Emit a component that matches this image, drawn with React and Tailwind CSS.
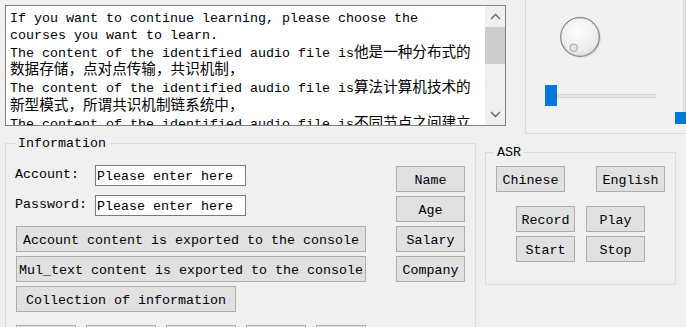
const mono = "font-['Liberation_Mono','Noto_Sans_CJK_SC',monospace]";

const Btn = ({ className = "", children }) => (
  <button
    className={`flex h-[26px] shrink-0 items-center justify-center border border-[#adadad] bg-[#e1e1e1] pt-[3px] text-[13.33px] leading-none text-black ${className}`}
  >
    {children}
  </button>
);

const Cjk = ({ children }) => <span className="text-[14.6px]">{children}</span>;

const Group = ({ title, titleClass, className, children }) => (
  <div className={`relative shrink-0 border border-[#dcdcdc] ${className}`}>
    <span className={`absolute top-[-8px] bg-[#f0f0f0] px-[3px] text-[13.33px] leading-[16px] ${titleClass}`}>
      {title}
    </span>
    {children}
  </div>
);

const Chevron = ({ up }) => (
  <svg width="11" height="7" viewBox="0 0 11 7">
    <path
      d={up ? "M1 6 L5.5 1.5 L10 6" : "M1 1 L5.5 5.5 L10 1"}
      fill="none"
      stroke="#606060"
      strokeWidth="1.3"
    />
  </svg>
);

const Dial = () => (
  <svg width="46" height="46" viewBox="0 0 46 46">
    <defs>
      <radialGradient id="knob" cx="0.45" cy="0.35" r="0.7">
        <stop offset="0" stopColor="#ffffff" />
        <stop offset="0.7" stopColor="#ececec" />
        <stop offset="1" stopColor="#dadada" />
      </radialGradient>
    </defs>
    <circle cx="23.5" cy="23.5" r="19.5" fill="#cfcfcf" opacity="0.6" />
    <circle cx="22" cy="22" r="19.3" fill="url(#knob)" stroke="#858585" strokeWidth="1.2" />
    <circle cx="15.7" cy="32.7" r="3.8" fill="#e2e2e2" stroke="#a6a6a6" strokeWidth="1" />
  </svg>
);

const lines = [
  ["If you want to continue learning, please choose the"],
  ["courses you want to learn."],
  ["The content of the identified audio file is", "他是一种分布式的"],
  ["", "数据存储，点对点传输，共识机制，"],
  ["The content of the identified audio file is", "算法计算机技术的"],
  ["", "新型模式，所谓共识机制链系统中，"],
  ["The content of the identified audio file is", "不同节点之间建立"],
];

export default function App() {
  return (
    <div className={`h-[327px] w-[686px] overflow-hidden bg-[#f0f0f0] text-black ${mono}`}>
      {/* top row */}
      <div className="flex h-[134px] items-start">
        <div className="ml-[5px] mt-[5px] flex h-[121px] w-[501px] shrink-0 border border-[#828282] bg-white">
          <div className="h-full flex-1 overflow-hidden pl-[4px] pt-[5px] text-[13.33px] leading-[16.8px] whitespace-pre">
            {lines.map(([a, b], i) => (
              <div key={i}>
                {a}
                {b && <Cjk>{b}</Cjk>}
              </div>
            ))}
          </div>
          <div className="flex w-[20px] flex-col items-center bg-[#f0f0f0]">
            <div className="flex h-[21px] items-center justify-center">
              <Chevron up />
            </div>
            <div className="h-[37px] w-full bg-[#cdcdcd]" />
            <div className="flex-1" />
            <div className="flex h-[21px] items-center justify-center">
              <Chevron />
            </div>
          </div>
        </div>

        <div className="ml-[19px] flex h-[134px] w-[170px] shrink-0 border-b border-l border-[#d9d9d9] bg-[#f1f1f1]">
          <div className="flex w-[149px] flex-col">
            <div className="ml-[32px] mt-[15px]">
              <Dial />
            </div>
            <div className="ml-[19px] mt-[24px] flex items-center">
              <div className="h-[21px] w-[12px] bg-[#0078d7]" />
              <div className="h-[4px] w-[99px] border border-[#d6d6d6] bg-[#e7eaea]" />
            </div>
          </div>
          <div className="flex h-[124px] w-[12px] flex-col">
            <div className="ml-[8px] w-[3px] flex-1 border-x border-[#d6d6d6] bg-[#e7eaea]" />
            <div className="h-[12px] w-[11px] bg-[#0078d7]" />
          </div>
        </div>
      </div>

      {/* bottom row */}
      <div className="flex items-start">
        <Group
          title="Information"
          titleClass="left-[9px]"
          className="ml-[5px] mt-[9px] flex h-[200px] w-[471px]"
        >
          <div className="flex shrink-0 flex-col pl-[10px] pt-[21px] text-[13.33px]">
            <div className="flex h-[21px] shrink-0 items-center">
              <span className="-ml-[1px] w-[80px] pb-[1px]">Account:</span>
              <div className="flex h-[21px] w-[151px] items-center border border-[#7a7a7a] bg-white pl-[1px] pt-[2px]">
                Please enter here
              </div>
            </div>
            <div className="mt-[9px] flex h-[21px] shrink-0 items-center">
              <span className="-ml-[1px] w-[80px] pb-[1px]">Password:</span>
              <div className="flex h-[21px] w-[151px] items-center border border-[#7a7a7a] bg-white pl-[1px] pt-[2px]">
                Please enter here
              </div>
            </div>
            <Btn className="mt-[10px] w-[350px]">Account content is exported to the console</Btn>
            <Btn className="mt-[4px] w-[350px]">Mul_text content is exported to the console</Btn>
            <Btn className="mt-[4px] w-[220px]">Collection of information</Btn>
            <div className="mt-[13px] flex shrink-0 gap-[10px]">
              <Btn className="w-[60px]" />
              <Btn className="w-[70px]" />
              <Btn className="w-[70px]" />
              <Btn className="w-[60px]" />
              <Btn className="w-[50px]" />
            </div>
          </div>
          <div className="ml-[30px] flex shrink-0 flex-col gap-[4px] pt-[22px]">
            <Btn className="w-[69px]">Name</Btn>
            <Btn className="w-[69px]">Age</Btn>
            <Btn className="w-[69px]">Salary</Btn>
            <Btn className="w-[69px]">Company</Btn>
          </div>
        </Group>

        <Group
          title="ASR"
          titleClass="left-[8px]"
          className="ml-[9px] mt-[18px] h-[133px] w-[191px]"
        >
          <div className="flex gap-[31px] pl-[10px] pt-[13px]">
            <Btn className="w-[69px]">Chinese</Btn>
            <Btn className="w-[69px]">English</Btn>
          </div>
          <div className="mt-[14px] grid w-fit grid-cols-[59px_59px] gap-x-[11px] gap-y-[4px] pl-[30px]">
            <Btn className="w-[59px]">Record</Btn>
            <Btn className="w-[59px]">Play</Btn>
            <Btn className="w-[59px]">Start</Btn>
            <Btn className="w-[59px]">Stop</Btn>
          </div>
        </Group>
      </div>
    </div>
  );
}
